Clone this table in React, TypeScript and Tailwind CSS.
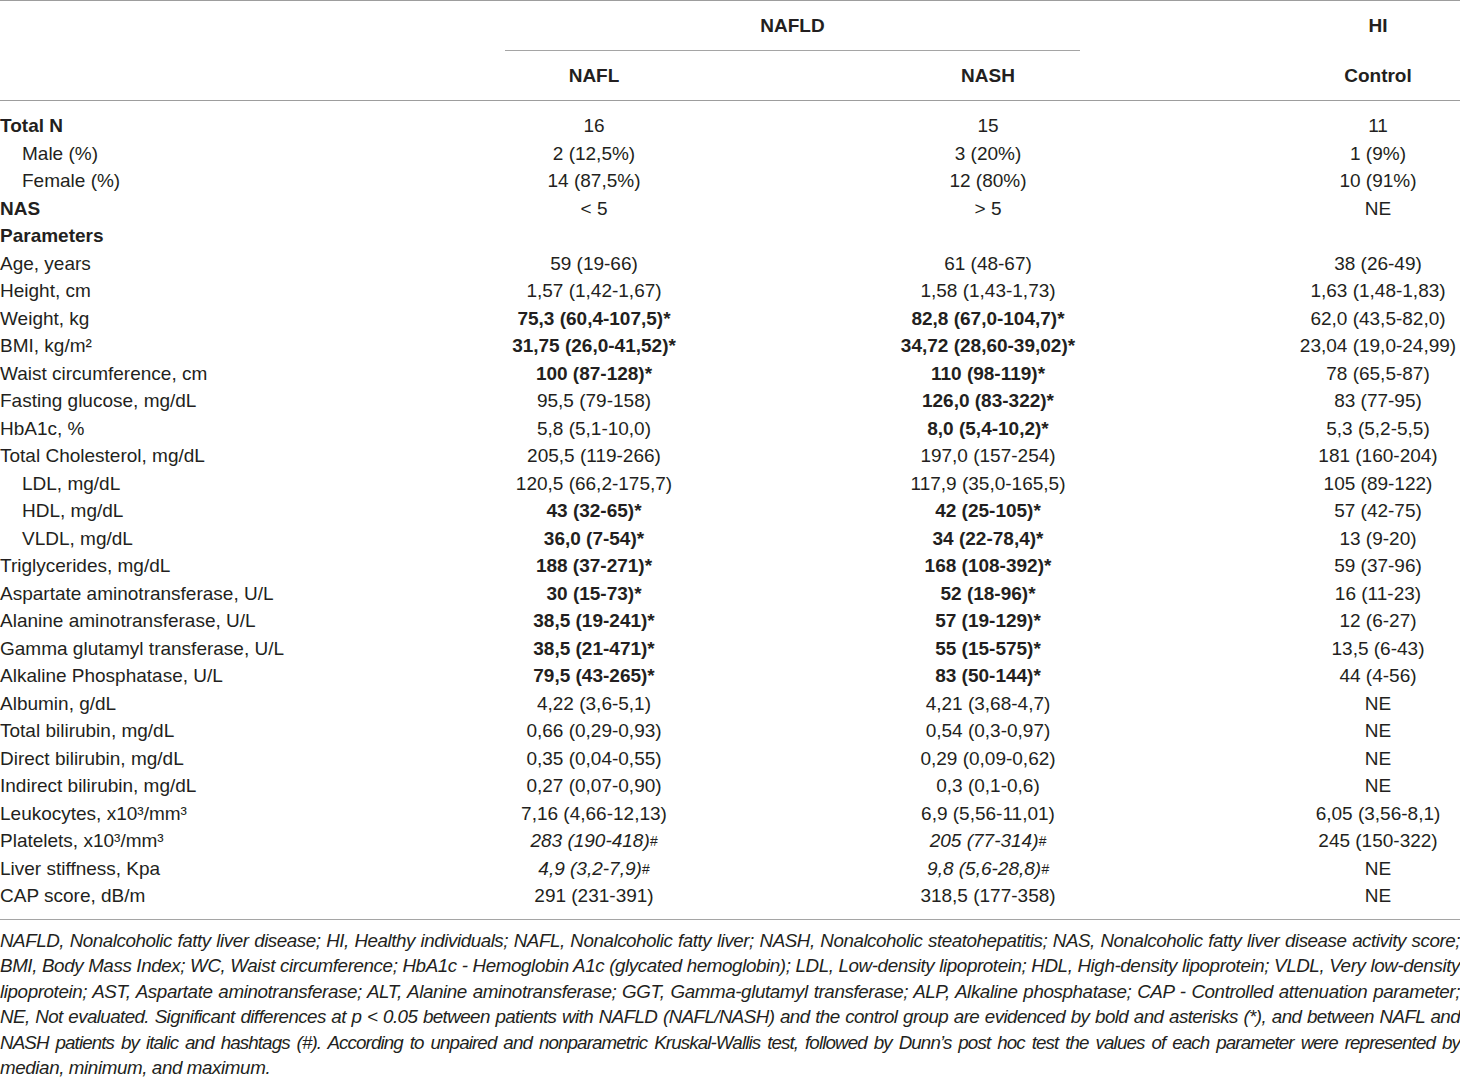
import React from "react";

type Cell = { v: string; s?: "b" | "i" };
type Row = { label: string; kind?: "head" | "sub"; cells: Cell[] };

const b = (v: string): Cell => ({ v, s: "b" });
const i = (v: string): Cell => ({ v, s: "i" });
const n = (v: string): Cell => ({ v });

const rows: Row[] = [
  { label: "Total N", kind: "head", cells: [n("16"), n("15"), n("11")] },
  { label: "Male (%)", kind: "sub", cells: [n("2 (12,5%)"), n("3 (20%)"), n("1 (9%)")] },
  { label: "Female (%)", kind: "sub", cells: [n("14 (87,5%)"), n("12 (80%)"), n("10 (91%)")] },
  { label: "NAS", kind: "head", cells: [n("< 5"), n("> 5"), n("NE")] },
  { label: "Parameters", kind: "head", cells: [n(""), n(""), n("")] },
  { label: "Age, years", cells: [n("59 (19-66)"), n("61 (48-67)"), n("38 (26-49)")] },
  { label: "Height, cm", cells: [n("1,57 (1,42-1,67)"), n("1,58 (1,43-1,73)"), n("1,63 (1,48-1,83)")] },
  { label: "Weight, kg", cells: [b("75,3 (60,4-107,5)*"), b("82,8 (67,0-104,7)*"), n("62,0 (43,5-82,0)")] },
  { label: "BMI, kg/m²", cells: [b("31,75 (26,0-41,52)*"), b("34,72 (28,60-39,02)*"), n("23,04 (19,0-24,99)")] },
  { label: "Waist circumference, cm", cells: [b("100 (87-128)*"), b("110 (98-119)*"), n("78 (65,5-87)")] },
  { label: "Fasting glucose, mg/dL", cells: [n("95,5 (79-158)"), b("126,0 (83-322)*"), n("83 (77-95)")] },
  { label: "HbA1c, %", cells: [n("5,8 (5,1-10,0)"), b("8,0 (5,4-10,2)*"), n("5,3 (5,2-5,5)")] },
  { label: "Total Cholesterol, mg/dL", cells: [n("205,5 (119-266)"), n("197,0 (157-254)"), n("181 (160-204)")] },
  { label: "LDL, mg/dL", kind: "sub", cells: [n("120,5 (66,2-175,7)"), n("117,9 (35,0-165,5)"), n("105 (89-122)")] },
  { label: "HDL, mg/dL", kind: "sub", cells: [b("43 (32-65)*"), b("42 (25-105)*"), n("57 (42-75)")] },
  { label: "VLDL, mg/dL", kind: "sub", cells: [b("36,0 (7-54)*"), b("34 (22-78,4)*"), n("13 (9-20)")] },
  { label: "Triglycerides, mg/dL", cells: [b("188 (37-271)*"), b("168 (108-392)*"), n("59 (37-96)")] },
  { label: "Aspartate aminotransferase, U/L", cells: [b("30 (15-73)*"), b("52 (18-96)*"), n("16 (11-23)")] },
  { label: "Alanine aminotransferase, U/L", cells: [b("38,5 (19-241)*"), b("57 (19-129)*"), n("12 (6-27)")] },
  { label: "Gamma glutamyl transferase, U/L", cells: [b("38,5 (21-471)*"), b("55 (15-575)*"), n("13,5 (6-43)")] },
  { label: "Alkaline Phosphatase, U/L", cells: [b("79,5 (43-265)*"), b("83 (50-144)*"), n("44 (4-56)")] },
  { label: "Albumin, g/dL", cells: [n("4,22 (3,6-5,1)"), n("4,21 (3,68-4,7)"), n("NE")] },
  { label: "Total bilirubin, mg/dL", cells: [n("0,66 (0,29-0,93)"), n("0,54 (0,3-0,97)"), n("NE")] },
  { label: "Direct bilirubin, mg/dL", cells: [n("0,35 (0,04-0,55)"), n("0,29 (0,09-0,62)"), n("NE")] },
  { label: "Indirect bilirubin, mg/dL", cells: [n("0,27 (0,07-0,90)"), n("0,3 (0,1-0,6)"), n("NE")] },
  { label: "Leukocytes, x10³/mm³", cells: [n("7,16 (4,66-12,13)"), n("6,9 (5,56-11,01)"), n("6,05 (3,56-8,1)")] },
  { label: "Platelets, x10³/mm³", cells: [i("283 (190-418)"), i("205 (77-314)"), n("245 (150-322)")] },
  { label: "Liver stiffness, Kpa", cells: [i("4,9 (3,2-7,9)"), i("9,8 (5,6-28,8)"), n("NE")] },
  { label: "CAP score, dB/m", cells: [n("291 (231-391)"), n("318,5 (177-358)"), n("NE")] },
];

// each note line with its own tracking so the justified lines break as in the source
const notes: [string, string][] = [
  ["NAFLD, Nonalcoholic fatty liver disease; HI, Healthy individuals; NAFL, Nonalcoholic fatty liver; NASH, Nonalcoholic steatohepatitis; NAS, Nonalcoholic fatty liver disease activity score;", "tracking-[-0.45px]"],
  ["BMI, Body Mass Index; WC, Waist circumference; HbA1c - Hemoglobin A1c (glycated hemoglobin); LDL, Low-density lipoprotein; HDL, High-density lipoprotein; VLDL, Very low-density", "tracking-[-0.4px]"],
  ["lipoprotein; AST, Aspartate aminotransferase; ALT, Alanine aminotransferase; GGT, Gamma-glutamyl transferase; ALP, Alkaline phosphatase; CAP - Controlled attenuation parameter;", "tracking-[-0.4px]"],
  ["NE, Not evaluated. Significant differences at p < 0.05 between patients with NAFLD (NAFL/NASH) and the control group are evidenced by bold and asterisks (*), and between NAFL and", "tracking-[-0.6px]"],
  ["NASH patients by italic and hashtags (#). According to unpaired and nonparametric Kruskal-Wallis test, followed by Dunn’s post hoc test the values of each parameter were represented by", "tracking-[-0.9px]"],
];

const cols = "grid grid-cols-[400px_388px_400px_108px_164px]";

const Value: React.FC<{ cell: Cell }> = ({ cell }) => {
  if (cell.s === "b") return <span className="font-bold">{cell.v}</span>;
  if (cell.s === "i")
    return (
      <span className="italic">
        {cell.v}
        <sup className="text-[14px] relative -top-[1px]">#</sup>
      </span>
    );
  return <span>{cell.v}</span>;
};

export default function App() {
  return (
    <div
      className="w-[1460px] bg-white text-[#231f20] text-[19px] leading-[27.5px]"
      style={{ fontFamily: '"Liberation Sans", Arial, sans-serif' }}
    >
      <div className="border-t border-b border-[#9d9d9d]">
        <div className={`${cols} h-[50px]`}>
          <div />
          <div className="col-span-2 ml-[105px] mr-[108px] border-b border-[#a5a5a5] flex items-center justify-center font-bold">
            NAFLD
          </div>
          <div />
          <div className="flex items-center justify-center font-bold">HI</div>
        </div>
        <div className={`${cols} h-[49px] font-bold`}>
          <div />
          <div className="flex items-center justify-center">NAFL</div>
          <div className="flex items-center justify-center">NASH</div>
          <div />
          <div className="flex items-center justify-center">Control</div>
        </div>
      </div>

      <div className="pt-[11px] pb-[9px] border-b border-[#a5a5a5]">
        {rows.map((r) => (
          <div key={r.label} className={`${cols} h-[27.5px] items-center`}>
            <div
              className={
                r.kind === "head" ? "font-bold" : r.kind === "sub" ? "pl-[22px]" : ""
              }
            >
              {r.label}
            </div>
            <div className="text-center whitespace-nowrap">
              <Value cell={r.cells[0]} />
            </div>
            <div className="text-center whitespace-nowrap">
              <Value cell={r.cells[1]} />
            </div>
            <div />
            <div className="text-center whitespace-nowrap">
              <Value cell={r.cells[2]} />
            </div>
          </div>
        ))}
      </div>

      <div className="pt-[8px] italic text-[18.8px] leading-[25.5px]">
        {notes.map(([t, tr], k) => (
          <p key={k} className={`text-justify [text-align-last:justify] ${tr}`}>
            {t}
          </p>
        ))}
        <p className="tracking-[-0.4px]">median, minimum, and maximum.</p>
      </div>
    </div>
  );
}
